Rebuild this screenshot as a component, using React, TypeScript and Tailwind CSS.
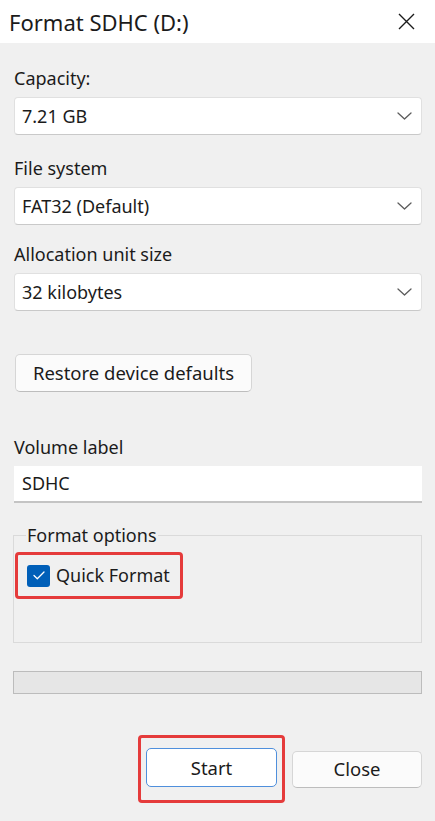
import type React from 'react'

const font = { fontFamily: '"Noto Sans", "Open Sans", sans-serif' }

function Chevron(): React.JSX.Element {
  return (
    <svg width="15" height="8" viewBox="0 0 15 8" fill="none" className="shrink-0">
      <path d="M1 1l6.5 6L14 1" stroke="#5c5c5c" strokeWidth="1.3" strokeLinecap="round" strokeLinejoin="round" />
    </svg>
  )
}

function Select({ value }: { value: string }): React.JSX.Element {
  return (
    <div className="flex h-[38px] items-center justify-between rounded-[4px] border border-[#e0e0e0] border-b-[#c9c9c9] bg-white pl-[7px] pr-[9px] text-[18px] text-[#1b1b1b]">
      <span>{value}</span>
      <Chevron />
    </div>
  )
}

function Field({ label, value, top }: { label: string; value: string; top: string }): React.JSX.Element {
  return (
    <div className={top}>
      <div className="mb-[7px] h-[24px] text-[18px] leading-[24px] text-[#1b1b1b]">{label}</div>
      <Select value={value} />
    </div>
  )
}

export default function App(): React.JSX.Element {
  return (
    <div style={font} className="flex h-[821px] w-[435px] flex-col bg-[#f0f0f0] text-[#1b1b1b]">
      <div className="flex h-[43px] shrink-0 items-center justify-between bg-white pl-[9px] pr-[20px]">
        <span className="text-[22px] leading-none text-[#1b1b1b]">Format SDHC (D:)</span>
        <svg width="17" height="17" viewBox="0 0 17 17">
          <path d="M1 1l15 15M16 1L1 16" stroke="#1b1b1b" strokeWidth="1.4" />
        </svg>
      </div>

      <div className="flex flex-col pl-[14px] pr-[13px]">
        <Field top="mt-[23px]" label="Capacity:" value="7.21 GB" />
        <Field top="mt-[21px]" label="File system" value="FAT32 (Default)" />
        <Field top="mt-[17px]" label="Allocation unit size" value="32 kilobytes" />

        <button className="ml-[1px] mt-[43px] flex h-[38px] w-[237px] items-center justify-center rounded-[5px] border border-[#d6d6d6] border-b-[#bdbdbd] bg-[#fbfbfb] text-[18.5px]">
          Restore device defaults
        </button>

        <div className="mt-[43px] h-[24px] text-[18px] leading-[24px]">Volume label</div>
        <div className="mt-[7px] flex h-[37px] items-center border-b-2 border-[#c4c4c4] bg-white pl-[8px] text-[18px]">
          SDHC
        </div>

        <fieldset className="-ml-[1px] mt-[20px] h-[120px] border border-[#dadada]">
          <legend className="ml-[12px] px-[1px] text-[18px] leading-[24px]">Format options</legend>
          <div className="ml-[1px] mt-[5px] flex h-[47px] w-[168px] items-center rounded-[4px] border-[3px] border-[#e53b3b] pl-[9px]">
            <span className="flex h-[22px] w-[23px] items-center justify-center rounded-[3px] bg-[#005fb8]">
              <svg width="12" height="9" viewBox="0 0 12 9" fill="none">
                <path d="M1 4.5l3.3 3.2L11 1" stroke="white" strokeWidth="1.3" strokeLinecap="round" strokeLinejoin="round" />
              </svg>
            </span>
            <span className="ml-[6px] text-[18px]">Quick Format</span>
          </div>
        </fieldset>

        <div className="-ml-[1px] mt-[28px] h-[23px] border border-[#bcbcbc] bg-[#e6e6e6]" />

        <div className="mt-[41px] flex items-center justify-end">
          <div className="rounded-[4px] border-[3px] border-[#e53b3b] px-[5px] pb-[13px] pt-[10px]">
            <button className="flex h-[39px] w-[131px] items-center justify-center rounded-[5px] border-[1.5px] border-[#4f8fdc] bg-white text-[18.5px]">
              Start
            </button>
          </div>
          <button className="ml-[7px] flex h-[37px] w-[130px] items-center justify-center rounded-[5px] border border-[#d6d6d6] border-b-[#bdbdbd] bg-[#fbfbfb] text-[18.5px]">
            Close
          </button>
        </div>
      </div>
    </div>
  )
}
